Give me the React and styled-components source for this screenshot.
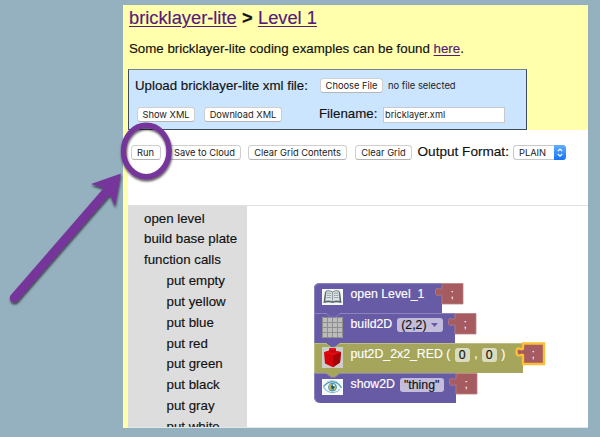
import React from "react";
import styled, { createGlobalStyle } from "styled-components";

const GlobalStyle = createGlobalStyle`
  * { box-sizing: border-box; }
  body { margin: 0; background: #95b1bf; font-family: "Liberation Sans", Arial, sans-serif; }
`;

const Stage = styled.div`
  position: relative;
  width: 600px;
  height: 437px;
  padding: 5px 12px 9px 123px;
  overflow: hidden;
  background: #95b1bf;
  color: #111;
  font-size: 13.3px;
  -webkit-text-stroke: 0.15px currentColor;
`;

const Page = styled.main`
  height: 423px;
  padding-left: 5px;
  overflow: hidden;
  background: #ffffac;
  white-space: nowrap;
`;

const Title = styled.h1`
  height: 31px;
  margin: 0;
  padding: 1px 0 0 1px;
  font-size: 18.3px;
  line-height: 24px;
  font-weight: 400;
`;

const Caret = styled.b`
  margin: 0 5.3px;
`;

const Link = styled.a`
  color: #551a7b;
  text-decoration: underline;
  text-decoration-thickness: 1px;
  text-underline-offset: 1.5px;
`;

const Intro = styled.p`
  height: 33px;
  margin: 0;
  padding-left: 1px;
  line-height: 25px;
`;

const UploadPanel = styled.section`
  width: 399px;
  height: 61px;
  padding-left: 6px;
  background: #cce5ff;
  border: 1px solid #3f4c5c;
  border-top-color: #78828c;
`;

const UploadRow = styled.div`
  display: flex;
  align-items: center;
  height: ${(p) => p.$h}px;
`;

const Label = styled.span`
  width: ${(p) => p.$w}px;
  flex: none;
  padding-bottom: ${(p) => p.$lift || 0}px;
`;

const Button = styled.button`
  flex: none;
  width: ${(p) => p.$w}px;
  height: 15px;
  margin: 0 ${(p) => p.$gap || 0}px 0 0;
  padding: 0;
  border: 1px solid #cfcfcf;
  border-bottom-color: #b5b5b5;
  border-radius: 3.5px;
  background: #fff;
  color: #222;
  font: 9.3px/13px Inter, sans-serif;
  -webkit-text-stroke: 0;
  text-align: center;
  white-space: nowrap;
`;

const FileStatus = styled.span`
  font: 9.4px/13px Inter, sans-serif;
  -webkit-text-stroke: 0;
  color: #222;
`;

const NameInput = styled.input`
  width: 122px;
  height: 16px;
  padding: 0 1.5px;
  border: 1px solid #c4c9cf;
  background: #fff;
  color: #222;
  font: 9.2px/14px Inter, sans-serif;
  -webkit-text-stroke: 0;
`;

const Lower = styled.section`
  height: 298px;
  background: #fff;
  border-bottom: 1px solid #dfe9e8;
`;

const Toolbar = styled.div`
  display: flex;
  align-items: flex-start;
  height: 75px;
  padding: 15px 0 0 2.5px;
`;

const OutputLabel = styled.span`
  width: 90px;
  margin: -1px 5.5px 0 0;
  font-size: 13.6px;
  line-height: 15px;
`;

const Select = styled.div`
  display: flex;
  justify-content: space-between;
  width: 53px;
  height: 15px;
  padding-left: 5px;
  border: 1px solid #c8c8c8;
  border-right: 0;
  border-radius: 3.5px;
  background: #fff;
  color: #222;
  font: 9.3px/14px Inter, sans-serif;
  -webkit-text-stroke: 0;
`;

const Stepper = styled.span`
  display: flex;
  width: 12px;
  height: 15px;
  margin-top: -1px;
  border-radius: 0 3.5px 3.5px 0;
  background: linear-gradient(#62adfb, #1673f8);
`;

const Workspace = styled.div`
  display: flex;
  height: 222px;
  border-top: 1px solid #e2e2e2;
`;

const Toolbox = styled.nav`
  width: 119px;
  flex: none;
  padding: 2.5px 0 0 16px;
  overflow: hidden;
  background: #ddd;
`;

const ToolItem = styled.div`
  height: 20.85px;
  padding-left: ${(p) => (p.$nested ? 22.5 : 0)}px;
  line-height: 20.85px;
`;

const BlockStack = styled.div`
  padding: 77px 0 0 66.5px;
`;

const BlockRow = styled.div`
  position: relative;
  display: flex;
  align-items: flex-start;
  width: ${(p) => p.$w}px;
  height: 30px;
  padding-left: 8px;
  background: ${(p) => p.$color};
  border-top: 1px solid ${(p) => p.$edge};
  border-radius: ${(p) => p.$radius || 0};
  box-shadow: inset 1px 0 0 ${(p) => p.$edge};
  color: #fff;
  font-size: 12.3px;
`;

const Notch = styled.svg`
  position: absolute;
  left: 12px;
  top: -1px;
`;

const IconBox = styled.span`
  display: flex;
  flex: none;
  width: 29px;
  height: 24px;
  padding-top: ${(p) => p.$top}px;
`;

const BlockText = styled.span`
  height: 20px;
  line-height: 20px;
  margin-right: ${(p) => p.$gap || 0}px;
`;

const Field = styled.span`
  display: flex;
  flex: none;
  align-items: center;
  width: ${(p) => p.$w}px;
  height: 14px;
  margin: 3.5px ${(p) => p.$gap || 0}px 0 0;
  padding-left: 4px;
  border-radius: 3px;
  background: ${(p) => p.$bg};
  color: #111;
`;

const Plug = styled.svg`
  position: absolute;
  left: calc(100% - 9px);
  top: -3px;
  overflow: visible;
`;

const Annotation = styled.svg`
  position: absolute;
  inset: 0;
  pointer-events: none;
`;

const PURPLE = { $color: "#685ba5", $edge: "#8c82bc" };
const OLIVE = { $color: "#a5a55b", $edge: "#bdbd86" };

function SemiPlug({ selected }) {
  return (
    <Plug width="33" height="26">
      <path
        d="M9 2.5H30V23H9V14C7.5 13.2 6.5 14.6 4.6 14.4C2.8 14.2 2.5 13 2.5 11C2.5 9 2.6 7.6 4.2 7.5C6 7.3 7.5 9.2 9 7.6Z"
        fill="#a55b5f"
        stroke={selected ? "#fcbe35" : "#b98084"}
        strokeWidth={selected ? 2.4 : 0.8}
      />
      <text x="17.6" y="17" fill="#fff" fontSize="12.3">;</text>
    </Plug>
  );
}

function BookIcon() {
  return (
    <svg width="21" height="16" viewBox="0 0 21 16">
      <rect width="21" height="16" fill="#f5f8f8" />
      <path d="M3 3L1.5 14Q7 12.5 10.5 14Q14 12.5 19.5 14L18 3" fill="#4e5d62" />
      <path d="M4 2Q8 1 10.5 3Q13 1 17 2L18.2 12.3Q13.5 11.3 10.5 12.7Q7.5 11.3 2.8 12.3Z" fill="#dfe7e7" stroke="#53646a" strokeWidth=".8" />
      <path d="M10.5 3V12.7M5 4.3Q7.5 3.6 9.3 4.6M4.8 6.5Q7.5 5.8 9.3 6.8M4.5 8.8Q7.5 8 9.3 9M11.7 4.6Q13.5 3.6 16 4.3M11.7 6.8Q13.5 5.8 16.3 6.5M11.7 9Q13.5 8 16.6 8.8" fill="none" stroke="#7d8b90" strokeWidth=".8" />
    </svg>
  );
}

function GridIcon() {
  return (
    <svg width="21" height="21" viewBox="0 0 21 21">
      <rect width="21" height="21" fill="#bcbcbc" />
      <path d="M.5 .5H20.5V20.5H.5ZM5.5 0V21M10.5 0V21M15.5 0V21M0 5.5H21M0 10.5H21M0 15.5H21" fill="none" stroke="#8b8b8b" strokeWidth=".9" />
    </svg>
  );
}

function BrickIcon() {
  return (
    <svg width="21" height="21" viewBox="0 0 21 21">
      <rect width="21" height="21" fill="#cdcdc9" />
      <path d="M2 5.2L9 3L19 5L18 15.5L11 20.3L3 16.5Z" fill="#d4050a" />
      <path d="M11 8.5L19 5L18 15.5L11 20.3Z" fill="#a3060a" />
      <path d="M2 5.2L9 3L19 5L11 8.5Z" fill="#e00a10" />
      <path d="M7 5V1.8Q10.5 .4 14 1.8V5Q10.5 6.6 7 5Z" fill="#c8060b" />
      <ellipse cx="10.5" cy="2" rx="3.5" ry="1.1" fill="#e81319" />
    </svg>
  );
}

function EyeIcon() {
  return (
    <svg width="21" height="16" viewBox="0 0 21 16">
      <rect width="21" height="16" fill="#f6faf9" />
      <path d="M1.5 7.5Q6 2.6 11 2.8Q16 3 19.5 8.8" fill="none" stroke="#5a9fba" strokeWidth="1.4" />
      <path d="M1.5 8Q5 13.5 10.5 13.6Q15 13.5 18 10" fill="none" stroke="#86b9cb" strokeWidth="1.1" />
      <path d="M5 2.6Q10 .2 15.5 2.8" fill="none" stroke="#a5cbd8" strokeWidth=".8" />
      <circle cx="10.5" cy="8.2" r="4.4" fill="#4e9abb" />
      <path d="M7 5.8Q8.5 4.5 10 5.2L8.7 8L10 11.5Q7.5 11 6.8 8.8Z" fill="#c5b753" />
      <path d="M12.4 6.5L14.3 7.5L13.5 10.5L11.8 11.6Z" fill="#c5b753" />
      <circle cx="10.8" cy="8" r="1.7" fill="#1e5470" />
      <circle cx="11.8" cy="6.3" r="1" fill="#fff" />
    </svg>
  );
}

function Join({ color, edge }) {
  return (
    <Notch width="15" height="6">
      <path d="M0 0L5 4H9L14 0Z" fill={color} />
      <path d="M0 .5L5 4.3H9L14 .5" fill="none" stroke={edge} strokeWidth=".8" />
    </Notch>
  );
}

const items = ["empty", "yellow", "blue", "red", "green", "black", "gray", "white"];

export default function App() {
  return (
    <Stage>
      <GlobalStyle />
      <Page>
        <Title>
          <Link>bricklayer-lite</Link>
          <Caret>&gt;</Caret>
          <Link>Level 1</Link>
        </Title>
        <Intro>
          Some bricklayer-lite coding examples can be found <Link>here</Link>.
        </Intro>
        <UploadPanel>
          <UploadRow $h={31}>
            <Label $w={185}>Upload bricklayer-lite xml file:</Label>
            <Button $w={63} $gap={5}>Choose File</Button>
            <FileStatus>no file selected</FileStatus>
          </UploadRow>
          <UploadRow $h={27}>
            <Label $w={2} />
            <Button $w={58} $gap={9}>Show XML</Button>
            <Button $w={78} $gap={37}>Download XML</Button>
            <Label $w={63.5} $lift={2}>Filename:</Label>
            <NameInput defaultValue="bricklayer.xml" />
          </UploadRow>
        </UploadPanel>
        <Lower>
          <Toolbar>
            <Button $w={30} $gap={8}>Run</Button>
            <Button $w={72} $gap={7.5}>Save to Cloud</Button>
            <Button $w={99} $gap={8}>Clear Grid Contents</Button>
            <Button $w={57} $gap={5.5}>Clear Grid</Button>
            <OutputLabel>Output Format:</OutputLabel>
            <Select>
              PLAIN
              <Stepper>
                <svg width="12" height="15" viewBox="0 0 12 15">
                  <path d="M3.8 6.2L6 4L8.2 6.2M3.8 9L6 11.2L8.2 9" fill="none" stroke="#fff" strokeWidth="1.1" />
                </svg>
              </Stepper>
            </Select>
          </Toolbar>
          <Workspace>
            <Toolbox>
              <ToolItem>open level</ToolItem>
              <ToolItem>build base plate</ToolItem>
              <ToolItem>function calls</ToolItem>
              {items.map((name) => (
                <ToolItem key={name} $nested>put {name}</ToolItem>
              ))}
            </Toolbox>
            <BlockStack>
              <BlockRow {...PURPLE} $w={128} $radius="5px 0 0 0">
                <IconBox $top={5}><BookIcon /></IconBox>
                <BlockText>open Level_1</BlockText>
                <SemiPlug />
              </BlockRow>
              <BlockRow {...PURPLE} $w={141}>
                <Join color="#685ba5" edge="#8c82bc" />
                <IconBox $top={3}><GridIcon /></IconBox>
                <BlockText $gap={5}>build2D</BlockText>
                <Field $w={45.5} $bg="#c3bddb">
                  (2,2)
                  <svg width="12" height="6" viewBox="0 0 12 6">
                    <path d="M4 1H11L7.5 5Z" fill="#685ba5" />
                  </svg>
                </Field>
                <SemiPlug />
              </BlockRow>
              <BlockRow {...OLIVE} $w={209}>
                <Join color="#685ba5" edge="#bdbd86" />
                <IconBox $top={3}><BrickIcon /></IconBox>
                <BlockText $gap={4.5}>put2D_2x2_RED (</BlockText>
                <Field $w={15.5} $gap={4} $bg="#dbdbbd">0</Field>
                <BlockText $gap={4}>,</BlockText>
                <Field $w={15.5} $gap={4} $bg="#dbdbbd">0</Field>
                <BlockText>)</BlockText>
                <SemiPlug selected />
              </BlockRow>
              <BlockRow {...PURPLE} $w={142.5} $radius="0 0 0 6px">
                <Join color="#a5a55b" edge="#8c82bc" />
                <IconBox $top={5}><EyeIcon /></IconBox>
                <BlockText $gap={5}>show2D</BlockText>
                <Field $w={44} $bg="#c3bddb">"thing"</Field>
                <SemiPlug />
              </BlockRow>
            </BlockStack>
          </Workspace>
        </Lower>
      </Page>
      <Annotation width="600" height="437" viewBox="0 0 600 437">
        <defs>
          <filter id="shadow" x="-20%" y="-20%" width="140%" height="150%">
            <feDropShadow dx="0.5" dy="2" stdDeviation="1.2" floodColor="#000" floodOpacity=".65" />
          </filter>
        </defs>
        <g filter="url(#shadow)">
          <ellipse cx="146.3" cy="151" rx="22.8" ry="25.7" fill="none" stroke="#76369a" strokeWidth="5.5" />
          <path d="M14.3 298L108 190" stroke="#76369a" strokeWidth="9" strokeLinecap="round" />
          <path d="M121 173.5L91 184L103.5 188L109.5 194L115 206.5Z" fill="#76369a" />
        </g>
      </Annotation>
    </Stage>
  );
}
